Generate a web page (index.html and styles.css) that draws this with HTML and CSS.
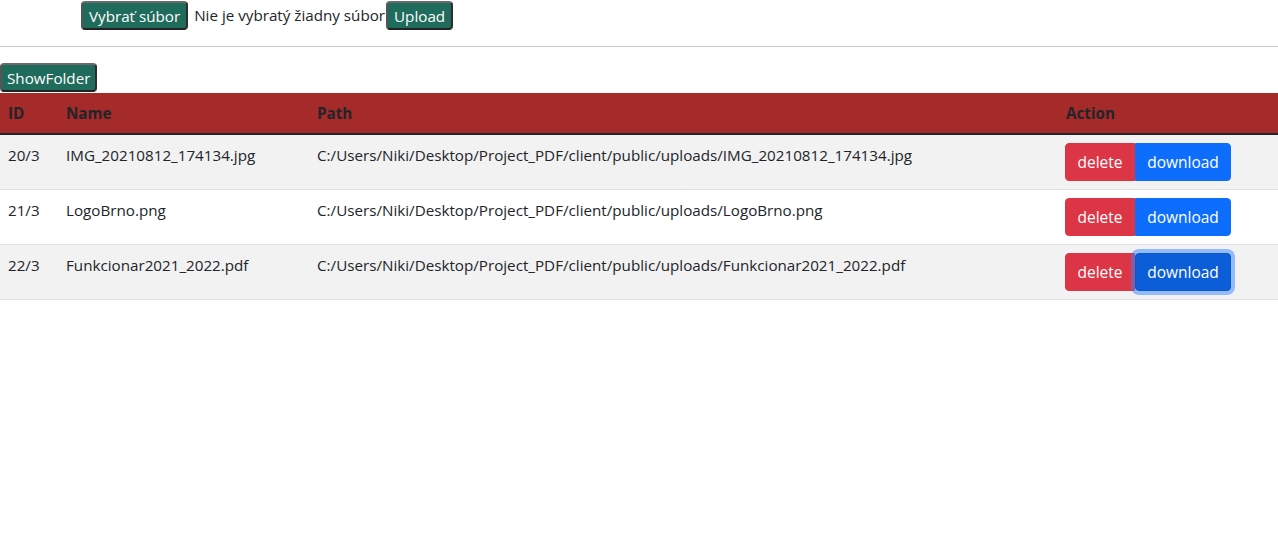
FILE: index.html
```html
<!DOCTYPE html>
<html lang="sk">
<head>
<meta charset="utf-8">
<link rel="stylesheet" href="styles.css">
</head>
<body>
<form class="upload">
  <button type="button" class="btn-teal">Vybrať súbor</button>
  <span class="file-name">Nie je vybratý žiadny súbor</span>
  <button type="button" class="btn-teal">Upload</button>
</form>
<hr class="divider">
<button type="button" class="btn-teal show">ShowFolder</button>
<table class="files">
  <thead>
    <tr><th class="c-id">ID</th><th class="c-name">Name</th><th class="c-path">Path</th><th class="c-action">Action</th></tr>
  </thead>
  <tbody>
    <tr class="odd">
      <td>20/3</td><td>IMG_20210812_174134.jpg</td><td>C:/Users/Niki/Desktop/Project_PDF/client/public/uploads/IMG_20210812_174134.jpg</td>
      <td><div class="actions"><button class="btn btn-del">delete</button><button class="btn btn-dl">download</button></div></td>
    </tr>
    <tr>
      <td>21/3</td><td>LogoBrno.png</td><td>C:/Users/Niki/Desktop/Project_PDF/client/public/uploads/LogoBrno.png</td>
      <td><div class="actions"><button class="btn btn-del">delete</button><button class="btn btn-dl">download</button></div></td>
    </tr>
    <tr class="odd">
      <td>22/3</td><td>Funkcionar2021_2022.pdf</td><td>C:/Users/Niki/Desktop/Project_PDF/client/public/uploads/Funkcionar2021_2022.pdf</td>
      <td><div class="actions"><button class="btn btn-del">delete</button><button class="btn btn-dl focus">download</button></div></td>
    </tr>
  </tbody>
</table>
</body>
</html>
```
FILE: styles.css
```css
* { box-sizing: border-box; }
body {
  margin: 0;
  font-family: "Open Sans", "Noto Sans", sans-serif;
  font-size: 15.2px;
  line-height: 24px;
  color: #212529;
  background: #fff;
}
.upload {
  display: flex;
  align-items: flex-start;
  padding: 1px 0 0 81px;
  height: 31px;
}
.upload .file-name { line-height: 29px; }
.btn-teal {
  font: inherit;
  font-size: 15.2px;
  line-height: 24px;
  background: #1f6b5c;
  color: #fff;
  border: 2px solid;
  border-color: #6a6a6a #2e2e2e #222 #555;
  border-radius: 4px;
  padding: 0 6px;
  height: 29px;
}
.show {
  display: block;
  margin: 0 0 1px;
  padding: 0 5px;
}
.file-name {
  padding: 0 1px 0 6px;
}
.divider {
  margin: 15px 0 16px;
  border: 0;
  border-top: 1px solid #c8c8c8;
}
.files {
  width: 100%;
  border-collapse: collapse;
}
.files th, .files td {
  text-align: left;
  vertical-align: top;
  padding: 8px;
}
.files thead tr {
  background: #a52a2a;
}
.files th {
  font-weight: 700;
  border-bottom: 2px solid #212529;
}
.files td {
  border-bottom: 1px solid #dee2e6;
}
.files tr.odd td { background: #f2f2f2; }
.c-id { width: 58px; }
.c-name { width: 251px; }
.c-path { width: 749px; }
.actions { display: flex; margin-left: -1px; }
.btn {
  font: inherit;
  font-size: 15.5px;
  line-height: 24px;
  height: 38px;
  padding: 6px 0;
  text-align: center;
  color: #fff;
  border: 1px solid transparent;
}
.btn-del {
  background: #dc3545;
  border-color: #dc3545;
  border-radius: 4px 0 0 4px;
  width: 70px;
}
.btn-dl {
  background: #0d6efd;
  border-color: #0d6efd;
  border-radius: 0 4px 4px 0;
  width: 96px;
}
.btn-dl.focus {
  background: #0b5ed7;
  border-color: #0a58ca;
  box-shadow: 0 0 0 4px rgba(49, 132, 253, 0.5);
  border-radius: 4px;
}
```
